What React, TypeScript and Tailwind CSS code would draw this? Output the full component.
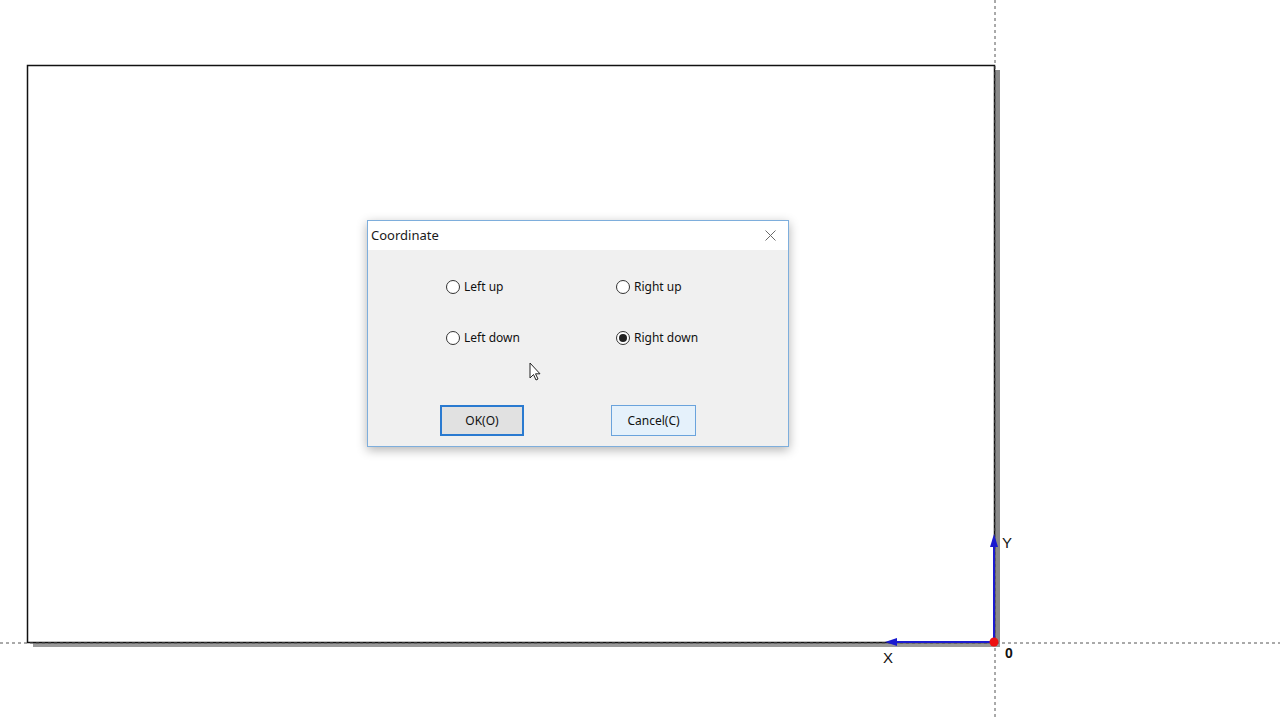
import React from "react";

function Radio({ label, checked }: { label: string; checked?: boolean }) {
  return (
    <div className="flex items-center h-[16px]">
      <div className="w-[14px] h-[14px] rounded-full border border-[#333] bg-white flex items-center justify-center">
        {checked && <div className="w-[8px] h-[8px] rounded-full bg-[#222]" />}
      </div>
      <span className="ml-[4px] text-[12px] text-[#111] leading-none">{label}</span>
    </div>
  );
}

function Drawing() {
  return (
    <svg className="absolute inset-0" width={1280} height={720} viewBox="0 0 1280 720">
      {/* shadows */}
      <rect x={994} y={70} width={6} height={577} fill="#8a8a8a" />
      <rect x={33} y={642} width={967} height={5} fill="#9a9a9a" />
      {/* page rectangle */}
      <rect x={27.5} y={65.5} width={967} height={577} fill="#ffffff" stroke="#111" strokeWidth={1.5} />
      {/* dashed guide lines */}
      <line x1={995} y1={0} x2={995} y2={720} stroke="#555" strokeWidth={1} strokeDasharray="3 3" />
      <line x1={0} y1={643} x2={1280} y2={643} stroke="#555" strokeWidth={1} strokeDasharray="3 3" />
      {/* axes */}
      <line x1={994} y1={642} x2={994} y2={545} stroke="#1a1ad0" strokeWidth={2} />
      <polygon points="994,534 990,547 998,547" fill="#1a1ad0" />
      <line x1={994} y1={642} x2={895} y2={642} stroke="#1a1ad0" strokeWidth={2} />
      <polygon points="885,642 897,638 897,646" fill="#1a1ad0" />
      <circle cx={994} cy={642} r={4.5} fill="#ee1111" />
      <text x={1002} y={548} fontSize={15} fontFamily="Liberation Sans, Arial, sans-serif" fill="#111">Y</text>
      <text x={883} y={663} fontSize={15} fontFamily="Liberation Sans, Arial, sans-serif" fill="#111">X</text>
      <text x={1005} y={658} fontSize={14} fontWeight="bold" fontFamily="Liberation Sans, Arial, sans-serif" fill="#111">0</text>
    </svg>
  );
}

export default function App() {
  return (
    <div
      className="relative w-[1280px] h-[720px] bg-white overflow-hidden"
      style={{ fontFamily: '"Noto Sans", "Open Sans", sans-serif' }}
    >
      <Drawing />
      {/* dialog window */}
      <div className="absolute left-[367px] top-[220px] w-[422px] h-[227px] border border-[#7eaedc] bg-[#f0f0f0] shadow-[0_3px_10px_rgba(0,0,0,0.3)] flex flex-col">
        <div className="h-[29px] bg-white flex items-center justify-between pl-[3px] pr-[12px]">
          <span className="text-[13px] text-[#1a1a1a]">Coordinate</span>
          <svg width={11} height={11} viewBox="0 0 11 11">
            <path d="M0.5 0.5 L10.5 10.5 M10.5 0.5 L0.5 10.5" stroke="#6a6a6a" strokeWidth={1} />
          </svg>
        </div>
        <div className="flex-1 flex flex-col pl-[78px] pt-[29px]">
          <div className="grid grid-cols-[170px_170px] gap-y-[35px]">
            <Radio label="Left up" />
            <Radio label="Right up" />
            <Radio label="Left down" />
            <Radio label="Right down" checked />
          </div>
          <div className="flex mt-[59px] ml-[-6px] gap-[87px]">
            <button className="w-[84px] h-[31px] border-2 border-[#2a7ad0] bg-[#e1e1e1] text-[12px] text-[#111]">OK(O)</button>
            <button className="w-[85px] h-[31px] border border-[#6aa3dc] bg-[#e5f1fb] text-[12px] text-[#111]">Cancel(C)</button>
          </div>
        </div>
      </div>
      {/* mouse cursor */}
      <svg className="absolute left-[529px] top-[362px]" width={13} height={20} viewBox="0 0 13 20">
        <path d="M1 1 L1 16 L4.5 12.5 L7 18 L9 17 L6.5 11.8 L11 11.8 Z" fill="#fff" stroke="#222" strokeWidth={1} strokeLinejoin="round" />
      </svg>
    </div>
  );
}
